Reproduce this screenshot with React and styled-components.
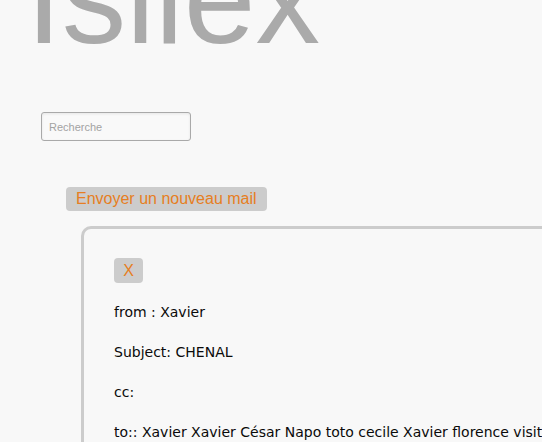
import React from 'react';
import styled, { createGlobalStyle } from 'styled-components';

const GlobalStyle = createGlobalStyle`
  html, body {
    margin: 0;
    padding: 0;
    background-color: #f8f8f8;
    overflow: hidden;
  }
  body {
    font-family: "Liberation Sans", Arial, sans-serif;
  }
`;

const Page = styled.div`
  display: flex;
  flex-direction: column;
  align-items: flex-start;
  min-height: 442px;
`;

const Title = styled.h1`
  margin: -66px 0 0 26px;
  font-family: "Liberation Sans", Arial, sans-serif;
  font-size: 129px;
  font-weight: 400;
  line-height: 1;
  color: #aaaaaa;
`;

const Search = styled.input`
  box-sizing: border-box;
  width: 150px;
  height: 29px;
  margin: 49px 0 0 41px;
  padding: 0 7px;
  border: 1px solid #a9a9a9;
  border-radius: 3px;
  background: #f9f9f9;
  box-shadow: inset 0 1px 3px rgba(0, 0, 0, 0.08);
  font-family: "Liberation Sans", Arial, sans-serif;
  font-size: 11px;
  outline: none;

  &::placeholder {
    color: #a3a3a3;
  }
`;

const Button = styled.button`
  box-sizing: border-box;
  height: ${props => props.$h || 24}px;
  padding: 0 ${props => props.$px || 10}px;
  border: none;
  border-radius: 4px;
  background-color: #cccccc;
  color: #e67e22;
  font-family: "Liberation Sans", Arial, sans-serif;
  font-size: 16px;
  line-height: 1;
  cursor: pointer;
`;

const NewMail = styled(Button)`
  margin: 46px 0 0 66px;
`;

const Panel = styled.div`
  box-sizing: border-box;
  width: 700px;
  margin: 15px 0 0 81px;
  padding: 29px 30px 30px;
  border: 3px solid #cccccc;
  border-radius: 10px;
  display: flex;
  flex-direction: column;
  align-items: flex-start;
  gap: 20px;
`;

const Close = styled(Button)`
  width: 29px;
  margin-bottom: -1px;
  padding: 0;
`;

const Line = styled.p`
  margin: 0;
  font-family: "DejaVu Sans", Verdana, sans-serif;
  font-size: 14px;
  line-height: 20px;
  color: #0a0a0a;
  white-space: nowrap;
`;

const App = () => {
  const mail = {
    from: 'Xavier',
    subject: 'CHENAL',
    cc: '',
    to: ['Xavier', 'Xavier', 'César', 'Napo', 'toto', 'cecile', 'Xavier', 'florence', 'visiteur'],
  };

  return (
    <>
      <GlobalStyle />
      <Page>
        <Title>Isilex</Title>
        <Search type="text" placeholder="Recherche" />
        <NewMail>Envoyer un nouveau mail</NewMail>
        <Panel>
          <Close $h={25}>X</Close>
          <Line>from : {mail.from}</Line>
          <Line>Subject: {mail.subject}</Line>
          <Line>cc:{mail.cc}</Line>
          <Line>to:: {mail.to.join(' ')}</Line>
        </Panel>
      </Page>
    </>
  );
};

export default App;
